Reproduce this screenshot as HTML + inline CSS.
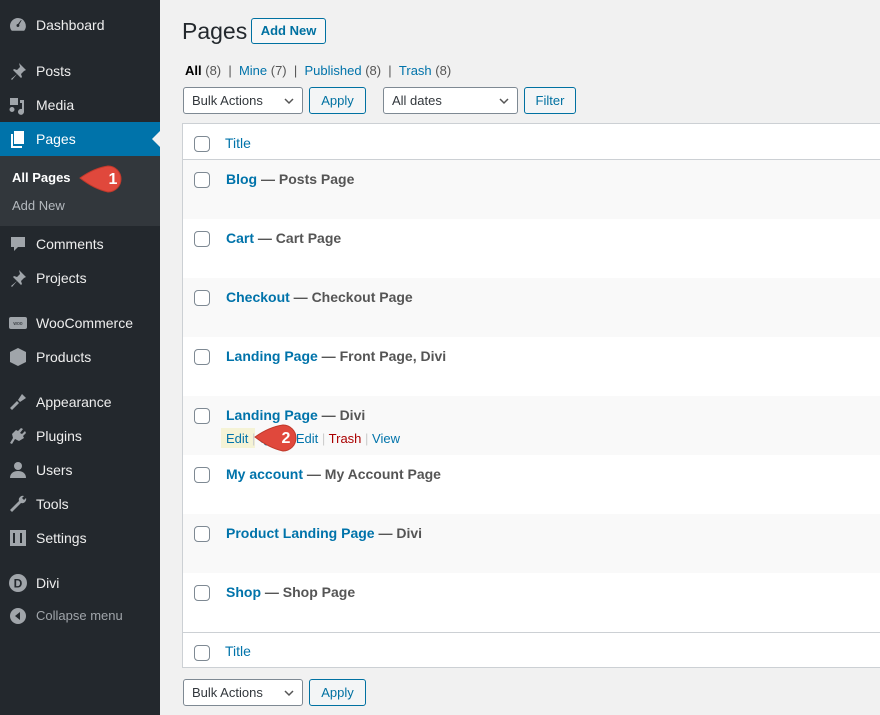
<!DOCTYPE html>
<html><head><meta charset="utf-8"><style>
*{margin:0;padding:0;box-sizing:border-box}
body{width:880px;height:715px;overflow:hidden;background:#f1f1f1;font-family:"Liberation Sans",sans-serif;font-size:13px;color:#444;position:relative}
.sb{position:absolute;left:0;top:0;width:160px;height:715px;background:#23282d}
.mi{position:absolute;left:0;width:160px;height:34px;color:#eee;font-size:14px;line-height:34px;padding-left:36px}
.mi svg{position:absolute;left:8px;top:7px;width:20px;height:20px;fill:#a0a5aa}
.sub{position:absolute;left:0;top:156px;width:160px;height:70px;background:#32373c}
.a{position:absolute;white-space:nowrap}
.lk{color:#0073aa}
.btn{position:absolute;border:1px solid #0071a1;border-radius:3px;background:#f3f5f6;color:#0071a1;font-size:13px;text-align:center}
.sel{position:absolute;border:1px solid #7e8993;border-radius:3px;background:#fff;color:#32373c;font-size:13px;padding-left:8px}
.sel svg{position:absolute;right:8px;top:9px}
.tbl{position:absolute;left:182px;top:123px;width:700px;height:545px;background:#fff;border:1px solid #ccd0d4}
.row{position:absolute;left:0;width:700px;height:59px}
.st{background:#f9f9f9}
.cb{position:absolute;left:11px;width:16px;height:16px;border:1px solid #7e8993;border-radius:4px;background:#fff}
.t{position:absolute;left:43px;font-size:14px;font-weight:bold;color:#555;white-space:nowrap}
.t b{color:#0073aa}
.badge{position:absolute}
</style></head><body>
<div class="sb">
<div class="mi" style="top:8px"><svg viewBox="0 0 20 20"><path d="M10 3a8 8 0 0 0-8 8c0 2 .7 3.6 1.8 4.8h12.4A8 8 0 0 0 10 3zm0 9a1.5 1.5 0 1 1 0-3l3-4 .6.4-2.5 4.2A1.5 1.5 0 0 1 10 12z"/></svg>Dashboard</div>
<div class="mi" style="top:54px"><svg viewBox="0 0 20 20"><path d="M11 2l7 7-2 1-3 3 1 3-1 1-4-4-5 6-1-1 6-5-4-4 1-1 3 1 3-3z"/></svg>Posts</div>
<div class="mi" style="top:88px"><svg viewBox="0 0 20 20"><path d="M2 3h8v7H2zM12 5h4v12a3 3 0 1 1-2-3V8h-2zM4 12a2.5 2.5 0 1 1 0 5 2.5 2.5 0 0 1 0-5z"/></svg>Media</div>
<div style="position:absolute;top:122px;left:0;width:160px;height:34px;background:#0073aa"></div>
<div class="mi" style="top:122px;color:#fff"><svg viewBox="0 0 20 20" style="fill:#fff"><path d="M6 2h10v13H6zM3 5h2v12h9v2H3z"/></svg>Pages</div>
<div style="position:absolute;left:152px;top:131px;width:0;height:0;border-top:8px solid transparent;border-bottom:8px solid transparent;border-right:8px solid #f1f1f1"></div>
<div class="sub"></div>
<div class="a" style="left:12px;top:170px;color:#fff;font-weight:bold;font-size:13px">All Pages</div>
<div class="a" style="left:12px;top:198px;color:#b4b9be;font-size:13px">Add New</div>
<div class="mi" style="top:227px"><svg viewBox="0 0 20 20"><path d="M3 3h14v10h-7l-4 4v-4H3z"/></svg>Comments</div>
<div class="mi" style="top:261px"><svg viewBox="0 0 20 20"><path d="M11 2l7 7-2 1-3 3 1 3-1 1-4-4-5 6-1-1 6-5-4-4 1-1 3 1 3-3z"/></svg>Projects</div>
<div class="mi" style="top:306px"><svg viewBox="0 0 20 20"><rect x="1" y="4" width="18" height="12" rx="2"/><text x="10" y="12" font-size="5" fill="#23282d" text-anchor="middle" font-family="Liberation Sans">woo</text></svg>WooCommerce</div>
<div class="mi" style="top:340px"><svg viewBox="0 0 20 20"><path d="M10 1l8 4v10l-8 4-8-4V5z"/></svg>Products</div>
<div class="mi" style="top:385px"><svg viewBox="0 0 20 20"><path d="M14 2l4 4-6 4-2-2zM9 9l2 2-7 7-2-2z"/></svg>Appearance</div>
<div class="mi" style="top:419px"><svg viewBox="0 0 20 20"><path d="M13 2l2 1-3 4 2 1 3-3 1 2-3 3 1 2-5 3-4-2-3 5-2-1 3-5-1-4 4-4 2 1z"/></svg>Plugins</div>
<div class="mi" style="top:453px"><svg viewBox="0 0 20 20"><circle cx="10" cy="6" r="4"/><path d="M2 18c0-5 4-7 8-7s8 2 8 7z"/></svg>Users</div>
<div class="mi" style="top:487px"><svg viewBox="0 0 20 20"><path d="M16 2a4 4 0 0 0-5 5L2 16l2 2 9-9a4 4 0 0 0 5-5l-2 2-2-2z"/></svg>Tools</div>
<div class="mi" style="top:521px"><svg viewBox="0 0 20 20"><path d="M2 2h16v16H2zM5 5v10h2V5zm7 0v10h2V5z"/></svg>Settings</div>
<div class="mi" style="top:566px"><svg viewBox="0 0 20 20"><circle cx="10" cy="10" r="9"/><text x="10" y="14.5" font-size="12" font-weight="bold" fill="#23282d" text-anchor="middle" font-family="Liberation Sans">D</text></svg>Divi</div>
<div class="mi" style="top:599px;color:#a0a5aa;font-size:13px"><svg viewBox="0 0 20 20"><circle cx="10" cy="10" r="8"/><path d="M12 6v8l-5-4z" fill="#23282d"/></svg>Collapse menu</div>
</div>
<div class="badge" style="left:78px;top:163px"><svg width="52" height="32" viewBox="0 0 52 32"><path d="M2 15 Q16 5 30 3 A13 13 0 1 1 30 29 Q16 26 2 15z" fill="#e0483c" stroke="#c0392b" stroke-width="1"/><text x="35" y="21" fill="#fff" font-size="16" font-weight="bold" font-family="Liberation Sans" text-anchor="middle">1</text></svg></div>

<div class="a" style="left:182px;top:18px;font-size:23px;color:#23282d">Pages</div>
<div class="btn" style="left:251px;top:18px;width:75px;height:26px;line-height:24px;font-weight:bold;background:#f7f7f7">Add New</div>
<div class="a" style="left:185px;top:63px;font-size:13px;color:#555"><b style="color:#000">All</b> (8) &nbsp;| &nbsp;<span class="lk">Mine</span> (7) &nbsp;| &nbsp;<span class="lk">Published</span> (8) &nbsp;| &nbsp;<span class="lk">Trash</span> (8)</div>
<div class="sel" style="left:183px;top:87px;width:120px;height:27px;line-height:25px">Bulk Actions<svg width="10" height="8"><path d="M1 2l4 4 4-4" stroke="#555" stroke-width="1.5" fill="none"/></svg></div>
<div class="btn" style="left:309px;top:87px;width:57px;height:27px;line-height:25px">Apply</div>
<div class="sel" style="left:383px;top:87px;width:135px;height:27px;line-height:25px">All dates<svg width="10" height="8"><path d="M1 2l4 4 4-4" stroke="#555" stroke-width="1.5" fill="none"/></svg></div>
<div class="btn" style="left:524px;top:87px;width:52px;height:27px;line-height:25px">Filter</div>

<div class="tbl">
<div class="cb" style="top:12px"></div><div class="a lk" style="left:42px;top:11px;font-size:14px">Title</div>
<div style="position:absolute;left:0;top:35px;width:700px;border-top:1px solid #ccd0d4"></div>
<div class="row st" style="top:36px"><div class="cb" style="top:12px"></div><div class="t" style="top:11px"><b>Blog</b> — Posts Page</div></div>
<div class="row" style="top:95px"><div class="cb" style="top:12px"></div><div class="t" style="top:11px"><b>Cart</b> — Cart Page</div></div>
<div class="row st" style="top:154px"><div class="cb" style="top:12px"></div><div class="t" style="top:11px"><b>Checkout</b> — Checkout Page</div></div>
<div class="row" style="top:213px"><div class="cb" style="top:12px"></div><div class="t" style="top:11px"><b>Landing Page</b> — Front Page, Divi</div></div>
<div class="row st" style="top:272px"><div class="cb" style="top:12px"></div><div class="t" style="top:11px"><b>Landing Page</b> — Divi</div>
<div style="position:absolute;left:38px;top:32px;width:34px;height:20px;background:#f5f3d6"></div>
<div class="a" style="left:43px;top:35px;font-size:13px;color:#0073aa">Edit <span style="color:#ccc">|</span> Quick Edit <span style="color:#ccc">|</span> <span style="color:#a00">Trash</span> <span style="color:#ccc">|</span> View</div></div>
<div class="row" style="top:331px"><div class="cb" style="top:12px"></div><div class="t" style="top:11px"><b>My account</b> — My Account Page</div></div>
<div class="row st" style="top:390px"><div class="cb" style="top:12px"></div><div class="t" style="top:11px"><b>Product Landing Page</b> — Divi</div></div>
<div class="row" style="top:449px"><div class="cb" style="top:12px"></div><div class="t" style="top:11px"><b>Shop</b> — Shop Page</div></div>
<div style="position:absolute;left:0;top:508px;width:700px;border-top:1px solid #ccd0d4"></div>
<div class="cb" style="top:521px"></div><div class="a lk" style="left:42px;top:519px;font-size:14px">Title</div>
</div>
<div class="badge" style="left:253px;top:422px"><svg width="52" height="32" viewBox="0 0 52 32"><path d="M2 15 Q16 5 30 3 A13 13 0 1 1 30 29 Q16 26 2 15z" fill="#e0483c" stroke="#c0392b" stroke-width="1"/><text x="33" y="21" fill="#fff" font-size="16" font-weight="bold" font-family="Liberation Sans" text-anchor="middle">2</text></svg></div>

<div class="sel" style="left:183px;top:679px;width:120px;height:27px;line-height:25px">Bulk Actions<svg width="10" height="8"><path d="M1 2l4 4 4-4" stroke="#555" stroke-width="1.5" fill="none"/></svg></div>
<div class="btn" style="left:309px;top:679px;width:57px;height:27px;line-height:25px">Apply</div>
</body></html>
